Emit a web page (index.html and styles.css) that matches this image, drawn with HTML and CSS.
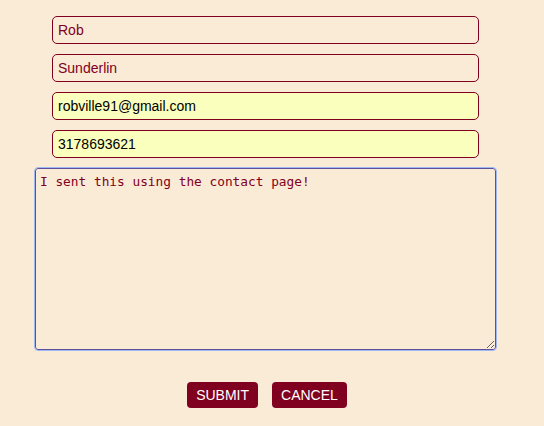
FILE: index.html
```html
<!DOCTYPE html>
<html>
<head>
<meta charset="utf-8">
<link rel="stylesheet" href="styles.css">
</head>
<body>
<form class="contact">
  <div class="fields">
    <input class="field" type="text" value="Rob">
    <input class="field" type="text" value="Sunderlin">
    <input class="field autofill" type="text" value="robville91@gmail.com">
    <input class="field autofill" type="text" value="3178693621">
  </div>
  <textarea class="message">I sent this using the contact page!</textarea>
  <div class="actions">
    <button type="button" class="btn">SUBMIT</button>
    <button type="button" class="btn">CANCEL</button>
  </div>
</form>
</body>
</html>
```
FILE: styles.css
```css
html, body {
  margin: 0;
  padding: 0;
  background: #faebd7;
}
body {
  font-family: "Liberation Sans", Arial, sans-serif;
}
.contact {
  width: 461px;
  margin: 0 0 0 35px;
  padding-top: 16px;
  display: flex;
  flex-direction: column;
}
.fields {
  display: flex;
  flex-direction: column;
  gap: 10px;
  padding: 0 17px;
}
.field {
  box-sizing: border-box;
  width: 427px;
  height: 28px;
  margin: 0;
  padding: 0 5px;
  border: 1px solid #800020;
  border-radius: 5px;
  background: transparent;
  color: #800020;
  font-family: "Liberation Sans", Arial, sans-serif;
  font-size: 14px;
  outline: none;
}
.field.autofill {
  background: #faffbd;
  color: #000;
}
.message {
  box-sizing: border-box;
  display: block;
  width: 461px;
  height: 182px;
  margin: 10px 0 0 0;
  padding: 5px 4px 4px;
  border: 1px solid #5b4f9e;
  border-radius: 3px;
  outline: 1px solid #9fb8f2;
  background: transparent;
  color: #800020;
  font-family: "DejaVu Sans Mono", "Liberation Mono", monospace;
  font-size: 12.8px;
  line-height: 16px;
  resize: both;
}
.actions {
  display: flex;
  justify-content: center;
  gap: 14px;
  margin-top: 32px;
  padding-left: 3px;
}
.btn {
  height: 26px;
  padding: 0 9px;
  border: none;
  border-radius: 4px;
  background: #800020;
  color: #fff;
  font-family: "Liberation Sans", Arial, sans-serif;
  font-size: 14px;
  cursor: pointer;
}
```
